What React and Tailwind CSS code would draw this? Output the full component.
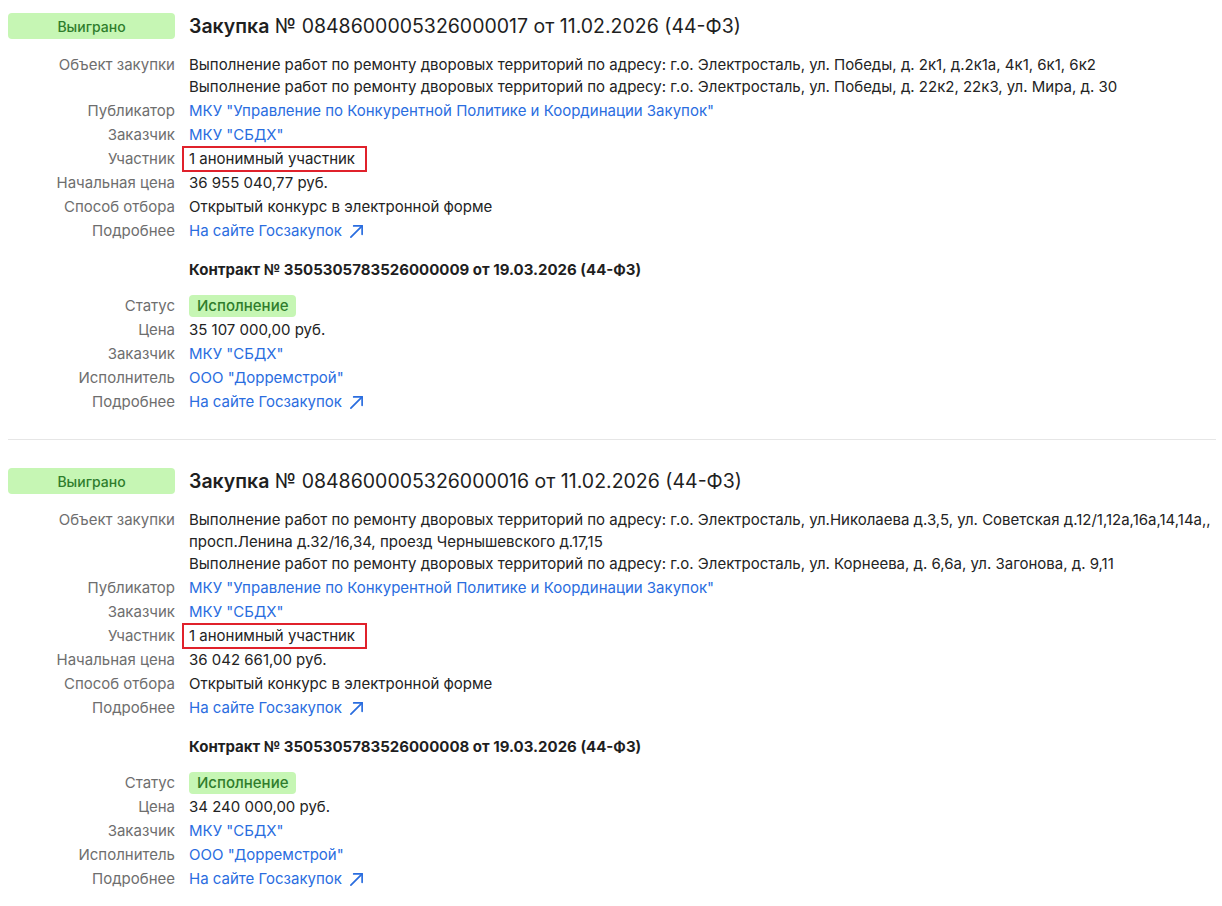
// ── Data ──────────────────────────────────────────────────────────────────────
const PURCHASES = [
  {
    number: '0848600005326000017',
    date: '11.02.2026',
    objects: [
      'Выполнение работ по ремонту дворовых территорий по адресу: г.о. Электросталь, ул. Победы, д. 2к1, д.2к1а, 4к1, 6к1, 6к2',
      'Выполнение работ по ремонту дворовых территорий по адресу: г.о. Электросталь, ул. Победы, д. 22к2, 22к3, ул. Мира, д. 30',
    ],
    price: '36 955 040,77 руб.',
    contract: { number: '3505305783526000009', date: '19.03.2026', price: '35 107 000,00 руб.' },
  },
  {
    number: '0848600005326000016',
    date: '11.02.2026',
    objects: [
      'Выполнение работ по ремонту дворовых территорий по адресу: г.о. Электросталь, ул.Николаева д.3,5, ул. Советская д.12/1,12а,16а,14,14а,, просп.Ленина д.32/16,34, проезд Чернышевского д.17,15',
      'Выполнение работ по ремонту дворовых территорий по адресу: г.о. Электросталь, ул. Корнеева, д. 6,6а, ул. Загонова, д. 9,11',
    ],
    price: '36 042 661,00 руб.',
    contract: { number: '3505305783526000008', date: '19.03.2026', price: '34 240 000,00 руб.' },
  },
];

// ── Sub-components ────────────────────────────────────────────────────────────
function Row({ label, children }) {
  return (
    <>
      <div className="text-right text-[#6e6e6e] leading-[22px] whitespace-nowrap">{label}</div>
      <div className="leading-[22px] text-[#232323] min-w-0">{children}</div>
    </>
  );
}

function Link({ children }) {
  return <a className="text-[#2a6ddf] cursor-pointer">{children}</a>;
}

function ExternalIcon() {
  return (
    <svg width="15" height="15" viewBox="0 0 16 16" fill="none" stroke="currentColor" strokeWidth="1.8" strokeLinecap="round" strokeLinejoin="round">
      <path d="M2 14 L14 2" />
      <path d="M5 2 H14 V11" />
    </svg>
  );
}

function MoreLink() {
  return (
    <a className="inline-flex items-center gap-[7px] text-[#2a6ddf] cursor-pointer">
      На сайте Госзакупок
      <ExternalIcon />
    </a>
  );
}

function Purchase({ p }) {
  return (
    <div className="grid grid-cols-[167px_1fr] gap-x-[14px] gap-y-[2px] text-[15px]">
      <div className="flex items-center">
        <div className="w-full h-[26px] rounded-[4px] bg-[#c6f6b4] text-[#2f7d2c] text-[14px] font-medium flex items-center justify-center">
          Выиграно
        </div>
      </div>
      <div className="text-[19.5px] leading-[28px] text-[#1f1f1f]">
        <span className="font-semibold">Закупка</span> № {p.number} от {p.date} (44-ФЗ)
      </div>

      <div className="col-span-2 h-[10px]" />

      <Row label="Объект закупки">
        <div className="flex flex-col">
          {p.objects.map((o) => (
            <div key={o}>{o}</div>
          ))}
        </div>
      </Row>
      <Row label="Публикатор">
        <Link>МКУ "Управление по Конкурентной Политике и Координации Закупок"</Link>
      </Row>
      <Row label="Заказчик">
        <Link>МКУ "СБДХ"</Link>
      </Row>
      <Row label="Участник">
        <span className="relative inline-block">
          1 анонимный участник
          <span className="absolute -left-[7px] -right-[12px] -top-[2px] -bottom-[2px] border-2 border-[#e0212b] pointer-events-none" />
        </span>
      </Row>
      <Row label="Начальная цена">{p.price}</Row>
      <Row label="Способ отбора">Открытый конкурс в электронной форме</Row>
      <Row label="Подробнее">
        <MoreLink />
      </Row>

      <div className="col-span-2 h-[13px]" />
      <div />
      <div className="font-bold leading-[22px] text-[#1f1f1f]">
        Контракт № {p.contract.number} от {p.contract.date} (44-ФЗ)
      </div>
      <div className="col-span-2 h-[10px]" />

      <Row label="Статус">
        <span className="inline-flex items-center h-[22px] px-[8px] rounded-[4px] bg-[#c6f6b4] text-[#2f7d2c] font-medium">
          Исполнение
        </span>
      </Row>
      <Row label="Цена">{p.contract.price}</Row>
      <Row label="Заказчик">
        <Link>МКУ "СБДХ"</Link>
      </Row>
      <Row label="Исполнитель">
        <Link>ООО "Дорремстрой"</Link>
      </Row>
      <Row label="Подробнее">
        <MoreLink />
      </Row>
    </div>
  );
}

// ── Main ──────────────────────────────────────────────────────────────────────
export default function App() {
  return (
    <div className="min-h-screen bg-white pl-[8px] pr-[6px] pt-[12px] font-['Inter',sans-serif]">
      <Purchase p={PURCHASES[0]} />
      <div className="mt-[26px] mb-[27px] border-t border-[#e6e6e6]" />
      <Purchase p={PURCHASES[1]} />
    </div>
  );
}
